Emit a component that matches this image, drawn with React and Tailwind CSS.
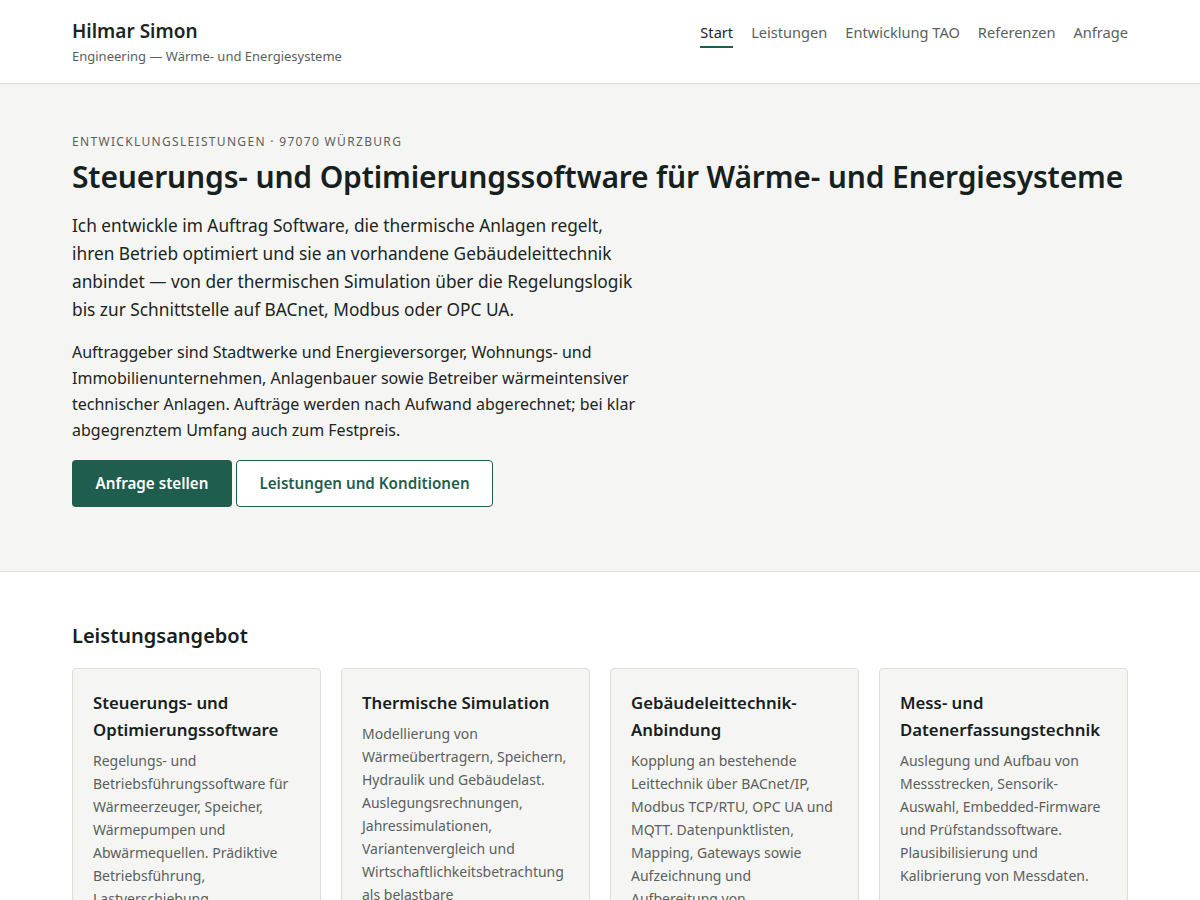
import React from "react";

const nav = ["Start", "Leistungen", "Entwicklung TAO", "Referenzen", "Anfrage"];

const cards = [
    {
        title: "Steuerungs- und Optimierungssoftware",
        text: "Regelungs- und Betriebsführungssoftware für Wärmeerzeuger, Speicher, Wärmepumpen und Abwärmequellen. Prädiktive Betriebsführung, Lastverschiebung, Spitzenlastmanagement und Anbindung an Wetter- und Preisprognosen.",
    },
    {
        title: "Thermische Simulation",
        text: "Modellierung von Wärmeübertragern, Speichern, Hydraulik und Gebäudelast. Auslegungsrechnungen, Jahressimulationen, Variantenvergleich und Wirtschaftlichkeitsbetrachtung als belastbare Entscheidungsgrundlage.",
    },
    {
        title: "Gebäudeleittechnik-Anbindung",
        text: "Kopplung an bestehende Leittechnik über BACnet/IP, Modbus TCP/RTU, OPC UA und MQTT. Datenpunktlisten, Mapping, Gateways sowie Aufzeichnung und Aufbereitung von Betriebsdaten.",
    },
    {
        title: "Mess- und Datenerfassungstechnik",
        text: "Auslegung und Aufbau von Messstrecken, Sensorik-Auswahl, Embedded-Firmware und Prüfstandssoftware. Plausibilisierung und Kalibrierung von Messdaten.",
    },
];

export default function App() {
    return (
        <div className="min-h-screen bg-white text-[#1b2522] font-['Noto_Sans',sans-serif]">
            {/* Header */}
            <header className="border-b border-[#dcdcd8] bg-white">
                <div className="mx-auto max-w-[1056px] h-[83px] flex justify-between">
                    <div className="flex flex-col pt-[19px]">
                        <span className="text-[19px] font-semibold leading-[24px] text-[#1b2522]">Hilmar Simon</span>
                        <span className="text-[13px] leading-[18px] mt-[4px] text-[#5a5f5d]">Engineering — Wärme- und Energiesysteme</span>
                    </div>
                    <nav className="flex items-start gap-[18px] pt-[21px]">
                        {nav.map((item, i) => (
                            <a
                                key={item}
                                className={
                                    i === 0
                                        ? "text-[14.6px] leading-[22px] pb-[3px] border-b-2 border-[#1f5e4e] text-[#1b2522]"
                                        : "text-[14.6px] leading-[22px] pb-[3px] border-b-2 border-transparent text-[#5a5f5d]"
                                }
                            >
                                {item}
                            </a>
                        ))}
                    </nav>
                </div>
            </header>

            {/* Hero */}
            <section className="bg-[#f5f5f3] border-b border-[#dcdcd8]">
                <div className="mx-auto max-w-[1056px] pt-[50px] pb-[64px]">
                    <p className="text-[12px] leading-[16px] tracking-[0.11em] uppercase text-[#5a5f5d]">
                        Entwicklungsleistungen · 97070 Würzburg
                    </p>
                    <h1 className="mt-[7px] text-[30px] leading-[40px] font-semibold tracking-[-0.005em] text-[#16201d]">
                        Steuerungs- und Optimierungssoftware für Wärme- und Energiesysteme
                    </h1>
                    <p className="mt-[15px] max-w-[570px] text-[17.3px] leading-[28px] text-[#1b2522]">
                        Ich entwickle im Auftrag Software, die thermische Anlagen regelt, ihren Betrieb optimiert und sie an vorhandene Gebäudeleittechnik anbindet — von der thermischen Simulation über die Regelungslogik bis zur Schnittstelle auf BACnet, Modbus oder OPC UA.
                    </p>
                    <p className="mt-[15px] max-w-[570px] text-[16px] leading-[26px] text-[#1b2522]">
                        Auftraggeber sind Stadtwerke und Energieversorger, Wohnungs- und Immobilienunternehmen, Anlagenbauer sowie Betreiber wärmeintensiver technischer Anlagen. Aufträge werden nach Aufwand abgerechnet; bei klar abgegrenztem Umfang auch zum Festpreis.
                    </p>
                    <div className="mt-[17px] flex gap-[4px]">
                        <button className="h-[47px] w-[160px] rounded-[4px] bg-[#1f5e4e] text-white text-[15.2px] font-semibold">
                            Anfrage stellen
                        </button>
                        <button className="h-[47px] w-[257px] rounded-[4px] border border-[#1f5e4e] bg-white text-[#1f5e4e] text-[15.2px] font-semibold">
                            Leistungen und Konditionen
                        </button>
                    </div>
                </div>
            </section>

            {/* Leistungsangebot */}
            <section className="bg-white">
                <div className="mx-auto max-w-[1056px] pt-[50px] pb-[60px]">
                    <h2 className="text-[20px] leading-[28px] font-semibold text-[#16201d]">Leistungsangebot</h2>
                    <div className="mt-[18px] grid grid-cols-4 gap-[20px]">
                        {cards.map((c) => (
                            <div key={c.title} className="rounded-[4px] border border-[#dcdcd8] bg-[#f5f5f3] px-[20px] pt-[20px] pb-[20px]">
                                <h3 className="text-[16.75px] leading-[27px] font-semibold text-[#16201d]">{c.title}</h3>
                                <p className="mt-[6px] text-[14px] leading-[23px] text-[#5a5f5d]">{c.text}</p>
                            </div>
                        ))}
                    </div>
                </div>
            </section>
        </div>
    );
}
